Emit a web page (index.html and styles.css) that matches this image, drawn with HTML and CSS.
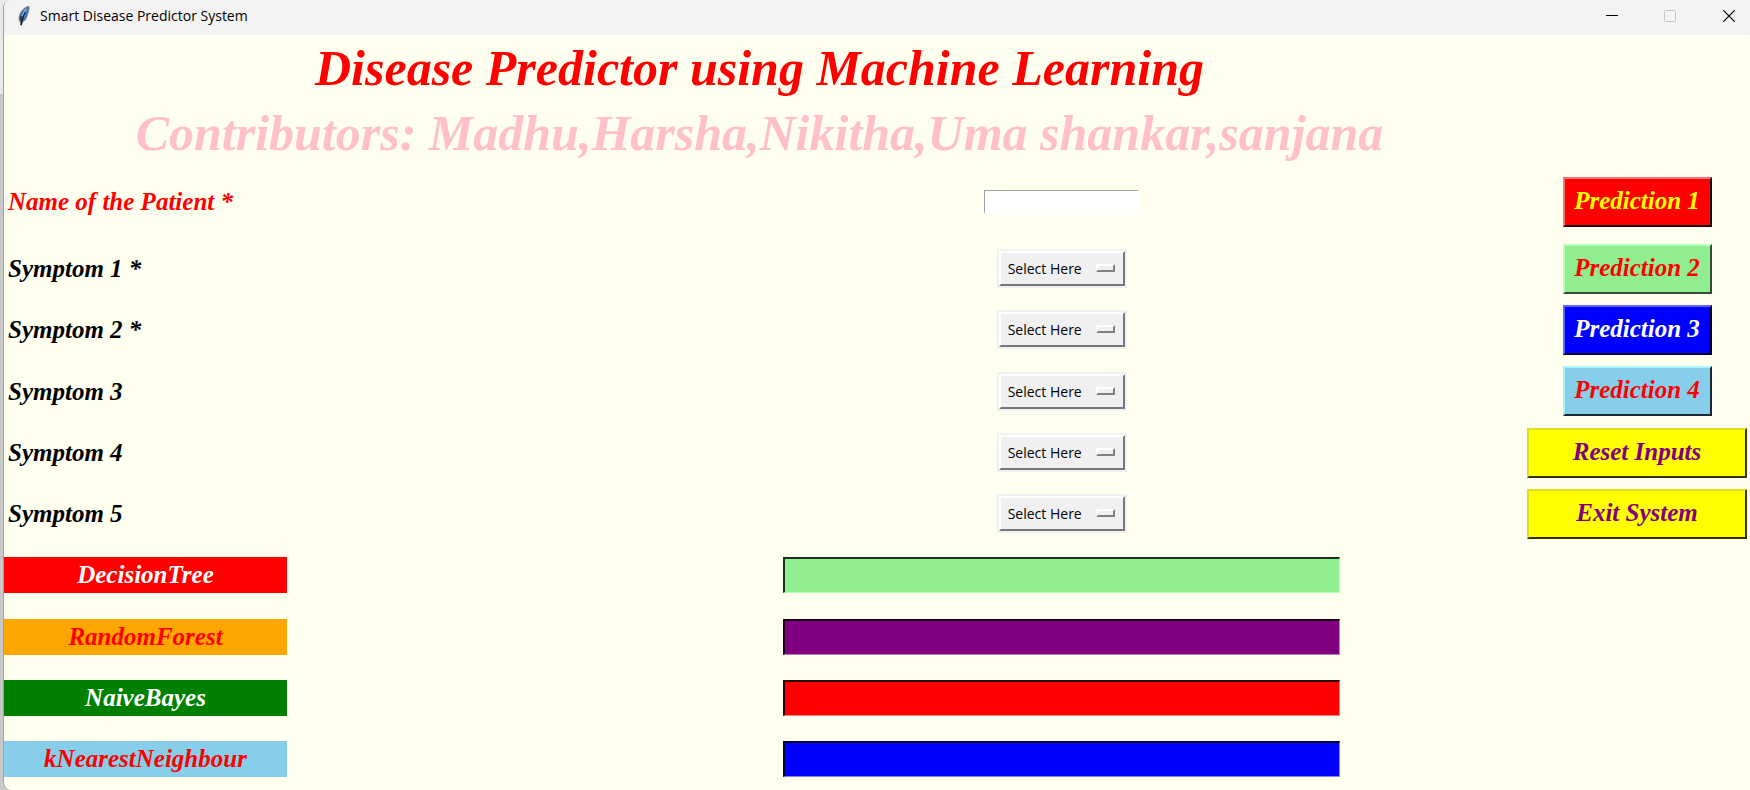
FILE: index.html
```html
<!DOCTYPE html>
<html lang="en">
<head>
<meta charset="utf-8">
<title>Smart Disease Predictor System</title>
<link rel="stylesheet" href="styles.css">
</head>
<body>
<div class="window">
  <header class="titlebar">
    <svg class="feather" viewBox="0 0 12 20" width="12" height="20" aria-hidden="true">
      <path d="M11 0.500C7 1 3.500 4 1.700 9C0.800 12 0.800 14 2 15.500L3 19.500L4 16C7 15 9 12 9.500 8C10.500 6 11.300 3 11 0.500Z" fill="#3f78bd" stroke="#777" stroke-width="1"/>
      <path d="M8.500 3C5.500 6 3.800 10 3 15" fill="none" stroke="#8bb9e8" stroke-width="1.200"/>
      <path d="M7.500 6C5.500 9 4 12 3.400 19M5 10V13M3 10V15" fill="none" stroke="#15202e" stroke-width="1.300"/>
    </svg>
    <span class="caption">Smart Disease Predictor System</span>
    <div class="controls">
      <button type="button" class="control" aria-label="Minimize"><svg viewBox="0 0 12 12" width="12" height="12"><path d="M0 5.500H12" stroke="#000"/></svg></button>
      <button type="button" class="control" aria-label="Maximize" disabled><svg viewBox="0 0 12 12" width="12" height="12"><rect x=".5" y=".5" width="11" height="11" rx="1" fill="none" stroke="#c4c4c4"/></svg></button>
      <button type="button" class="control control-close" aria-label="Close"><svg viewBox="0 0 12 12" width="12" height="12"><path d="M.3.300 11.700 11.700M11.700.300.300 11.700" stroke="#000" stroke-width="1.200"/></svg></button>
    </div>
  </header>
  <form class="predictor">
    <h1 class="heading">Disease Predictor using Machine Learning</h1>
    <h2 class="heading heading-pink">Contributors: Madhu,Harsha,Nikitha,Uma shankar,sanjana</h2>

    <label class="label label-required" for="name">Name of the Patient *</label>
    <input class="name" id="name" type="text">
    <button type="button" class="button red">Prediction 1</button>

    <label class="label" for="s1">Symptom 1 *</label>
    <span class="picker"><select id="s1"><option>Select Here</option></select></span>
    <button type="button" class="button green">Prediction 2</button>

    <label class="label" for="s2">Symptom 2 *</label>
    <span class="picker"><select id="s2"><option>Select Here</option></select></span>
    <button type="button" class="button blue">Prediction 3</button>

    <label class="label" for="s3">Symptom 3</label>
    <span class="picker"><select id="s3"><option>Select Here</option></select></span>
    <button type="button" class="button sky">Prediction 4</button>

    <label class="label" for="s4">Symptom 4</label>
    <span class="picker"><select id="s4"><option>Select Here</option></select></span>
    <button type="button" class="button wide">Reset Inputs</button>

    <label class="label" for="s5">Symptom 5</label>
    <span class="picker"><select id="s5"><option>Select Here</option></select></span>
    <button type="button" class="button wide">Exit System</button>

    <label class="model model-tree" for="r1">DecisionTree</label>
    <input class="result result-tree" id="r1" type="text">
    <label class="model model-forest" for="r2">RandomForest</label>
    <input class="result result-forest" id="r2" type="text">
    <label class="model model-bayes" for="r3">NaiveBayes</label>
    <input class="result result-bayes" id="r3" type="text">
    <label class="model model-knn" for="r4">kNearestNeighbour</label>
    <input class="result result-knn" id="r4" type="text">
  </form>
</div>
</body>
</html>
```

FILE: styles.css
```css
*, *::after { box-sizing: border-box; }

body {
  margin: 0;
  padding-left: 3px;
  background: linear-gradient(#e9e9e9 94px, #c8c8c8 94px);
}

.window {
  display: flex;
  flex-direction: column;
  min-height: 100vh;
  border-left: 1px solid #a0a0a0;
  border-radius: 8px 0 0 8px;
  overflow: hidden;
  background: #fffff0;
}

.titlebar {
  display: flex;
  align-items: center;
  height: 35px;
  padding: 0 0 4px 14px;
  background: #f3f3f3;
}

.caption {
  margin-left: 10px;
  font: 14px/20px "Open Sans", "Noto Sans", sans-serif;
  color: #000;
}

.controls { display: flex; margin-left: auto; }

.control {
  display: flex;
  align-items: center;
  justify-content: center;
  width: 58px;
  height: 31px;
  padding: 0;
  border: 0;
  background: none;
}

.control-close { width: 51px; padding-left: 9px; }

.predictor {
  flex: 1;
  display: grid;
  grid-template-columns: 2fr 3fr 235px;
  grid-template-rows: 65px 65px 73px repeat(9, minmax(50px, 1fr));
  align-items: center;
  justify-items: center;
  font: italic bold 25px/33px "Liberation Serif", "Times New Roman", serif;
}

.heading {
  grid-column: 1 / 3;
  margin: 0;
  font: inherit;
  font-size: 50px;
  line-height: 60px;
  white-space: nowrap;
  color: #f00;
}

.heading-pink { color: #ffc0cb; }

.label {
  grid-column: 1;
  justify-self: start;
  padding-left: 4px;
  color: #000;
}

.label-required { color: #f00; }

.name {
  width: 155px;
  height: 24px;
  padding: 1px 4px;
  border: 2px solid #fff;
  border-top: 1px solid #a0a0a0;
  border-left: 1px solid #a0a0a0;
  background: #fff;
  font: 15px/18px "Open Sans", sans-serif;
}

.picker {
  position: relative;
  padding: 2px;
  background: #f0f0f0;
}

.picker::after {
  content: "";
  position: absolute;
  right: 12px;
  top: 15px;
  width: 19px;
  height: 8px;
  border: 2px solid;
  border-color: #fff #808080 #808080 #fff;
  pointer-events: none;
}

.picker select {
  display: block;
  appearance: none;
  width: 126px;
  height: 35px;
  padding: 1px 7px 0;
  border: 2px solid;
  border-color: #fff #777 #777 #fff;
  border-radius: 0;
  background: #f0f0f0;
  color: #000;
  font: 14px/20px "Open Sans", "Noto Sans", sans-serif;
}

.button {
  grid-column: 3;
  width: 149px;
  height: 50px;
  margin-left: 9px;
  padding: 0 0 3px;
  border: 2px solid;
  font: inherit;
}

.red { background: #f00; color: #ff0; border-color: #ff7070 #200000 #200000 #ff7070; }
.green { background: #90ee90; color: #f00; border-color: #b8ffb8 #344a34 #344a34 #b8ffb8; }
.blue { background: #00f; color: #fff; border-color: #6464ff #000030 #000030 #6464ff; }
.sky { background: #87ceeb; color: #f00; border-color: #a6f4ff #172832 #172832 #a6f4ff; }

.wide {
  justify-self: stretch;
  width: auto;
  margin: 0 3px 0 12px;
  border-color: #dede20 #333300 #333300 #dede20;
  background: #ff0;
  color: #800080;
}

.model {
  grid-column: 1;
  justify-self: start;
  width: 283px;
  line-height: 36px;
  text-align: center;
}

.model-tree { background: #f00; color: #fff; }
.model-forest { background: #ffa500; color: #f00; }
.model-bayes { background: #008000; color: #fff; }
.model-knn { background: #87ceeb; color: #f00; }

.result {
  grid-column: 2;
  width: 557px;
  height: 36px;
  padding: 0 4px;
  border: 2px solid;
  border-right-width: 1px;
  border-bottom-width: 1px;
  font: inherit;
}

.result-tree { background: #90ee90; border-color: #1d301d #b4ffb4 #b4ffb4 #1d301d; }
.result-forest { background: #800080; border-color: #1a001a #c080c0 #c080c0 #1a001a; }
.result-bayes { background: #f00; border-color: #330000 #ff8080 #ff8080 #330000; }
.result-knn { background: #00f; border-color: #000033 #8080ff #8080ff #000033; }
```
